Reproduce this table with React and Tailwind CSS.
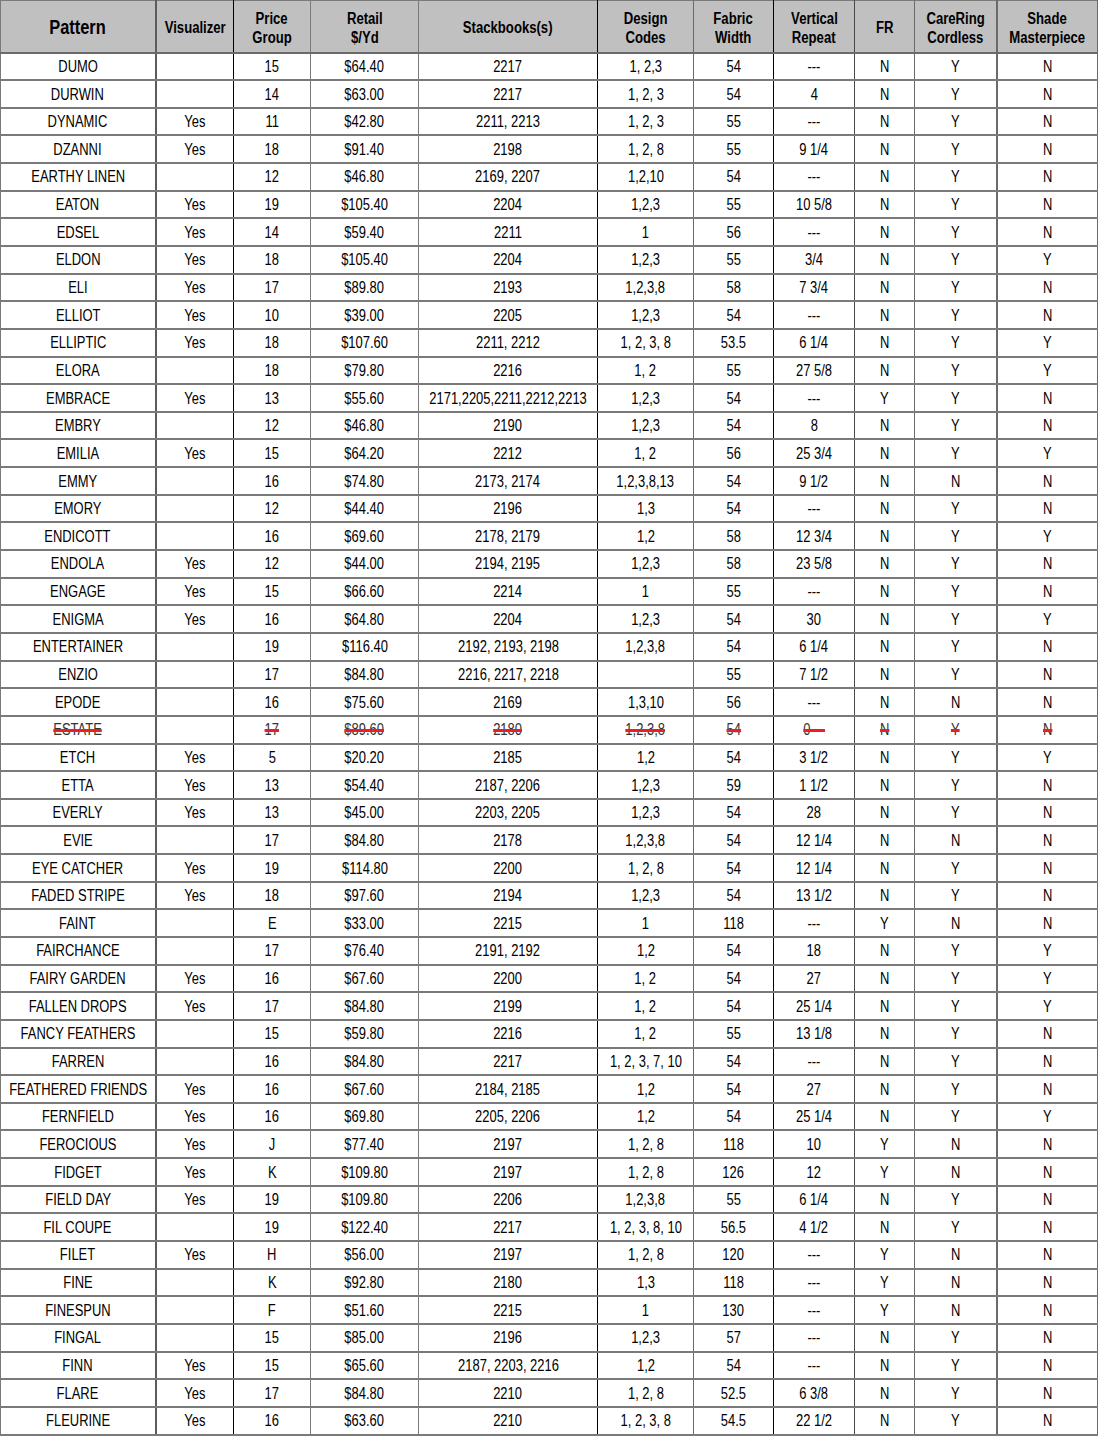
const COLS = [
  { key: 'pattern', label: ['Pattern'], width: 155, big: true, border: 'border-r-2 border-r-[#5c5c5c]' },
  { key: 'vis', label: ['Visualizer'], width: 78, border: 'border-r border-r-black' },
  { key: 'price', label: ['Price', 'Group'], width: 77, border: 'border-r border-r-[#7a7a7a]' },
  { key: 'retail', label: ['Retail', '$/Yd'], width: 108, border: 'border-r border-r-[#7a7a7a]' },
  { key: 'stack', label: ['Stackbooks(s)'], width: 179, border: 'border-r border-r-black' },
  { key: 'codes', label: ['Design', 'Codes'], width: 96, border: 'border-r border-r-[#6a6a6a]' },
  { key: 'fw', label: ['Fabric', 'Width'], width: 80, border: 'border-r border-r-black' },
  { key: 'vr', label: ['Vertical', 'Repeat'], width: 81, border: 'border-r border-r-[#4a4a4a]' },
  { key: 'fr', label: ['FR'], width: 60, border: 'border-r border-r-[#6a6a6a]' },
  { key: 'care', label: ['CareRing', 'Cordless'], width: 82, border: 'border-r-2 border-r-[#6a6a6a]' },
  { key: 'shade', label: ['Shade', 'Masterpiece'], width: 101, border: 'border-r border-r-[#6a6a6a]' },
];

const RAW = `DUMO||15|$64.40|2217|1, 2,3|54|---|N|Y|N
DURWIN||14|$63.00|2217|1, 2, 3|54|4|N|Y|N
DYNAMIC|Yes|11|$42.80|2211, 2213|1, 2, 3|55|---|N|Y|N
DZANNI|Yes|18|$91.40|2198|1, 2, 8|55|9 1/4|N|Y|N
EARTHY LINEN||12|$46.80|2169, 2207|1,2,10|54|---|N|Y|N
EATON|Yes|19|$105.40|2204|1,2,3|55|10 5/8|N|Y|N
EDSEL|Yes|14|$59.40|2211|1|56|---|N|Y|N
ELDON|Yes|18|$105.40|2204|1,2,3|55|3/4|N|Y|Y
ELI|Yes|17|$89.80|2193|1,2,3,8|58|7 3/4|N|Y|N
ELLIOT|Yes|10|$39.00|2205|1,2,3|54|---|N|Y|N
ELLIPTIC|Yes|18|$107.60|2211, 2212|1, 2, 3, 8|53.5|6 1/4|N|Y|Y
ELORA||18|$79.80|2216|1, 2|55|27 5/8|N|Y|Y
EMBRACE|Yes|13|$55.60|2171,2205,2211,2212,2213|1,2,3|54|---|Y|Y|N
EMBRY||12|$46.80|2190|1,2,3|54|8|N|Y|N
EMILIA|Yes|15|$64.20|2212|1, 2|56|25 3/4|N|Y|Y
EMMY||16|$74.80|2173, 2174|1,2,3,8,13|54|9 1/2|N|N|N
EMORY||12|$44.40|2196|1,3|54|---|N|Y|N
ENDICOTT||16|$69.60|2178, 2179|1,2|58|12 3/4|N|Y|Y
ENDOLA|Yes|12|$44.00|2194, 2195|1,2,3|58|23 5/8|N|Y|N
ENGAGE|Yes|15|$66.60|2214|1|55|---|N|Y|N
ENIGMA|Yes|16|$64.80|2204|1,2,3|54|30|N|Y|Y
ENTERTAINER||19|$116.40|2192, 2193, 2198|1,2,3,8|54|6 1/4|N|Y|N
ENZIO||17|$84.80|2216, 2217, 2218||55|7 1/2|N|Y|N
EPODE||16|$75.60|2169|1,3,10|56|---|N|N|N
ESTATE||17|$89.60|2180|1,2,3,8|54|0|N|Y|N
ETCH|Yes|5|$20.20|2185|1,2|54|3 1/2|N|Y|Y
ETTA|Yes|13|$54.40|2187, 2206|1,2,3|59|1 1/2|N|Y|N
EVERLY|Yes|13|$45.00|2203, 2205|1,2,3|54|28|N|Y|N
EVIE||17|$84.80|2178|1,2,3,8|54|12 1/4|N|N|N
EYE CATCHER|Yes|19|$114.80|2200|1, 2, 8|54|12 1/4|N|Y|N
FADED STRIPE|Yes|18|$97.60|2194|1,2,3|54|13 1/2|N|Y|N
FAINT||E|$33.00|2215|1|118|---|Y|N|N
FAIRCHANCE||17|$76.40|2191, 2192|1,2|54|18|N|Y|Y
FAIRY GARDEN|Yes|16|$67.60|2200|1, 2|54|27|N|Y|Y
FALLEN DROPS|Yes|17|$84.80|2199|1, 2|54|25 1/4|N|Y|Y
FANCY FEATHERS||15|$59.80|2216|1, 2|55|13 1/8|N|Y|N
FARREN||16|$84.80|2217|1, 2, 3, 7, 10|54|---|N|Y|N
FEATHERED FRIENDS|Yes|16|$67.60|2184, 2185|1,2|54|27|N|Y|N
FERNFIELD|Yes|16|$69.80|2205, 2206|1,2|54|25 1/4|N|Y|Y
FEROCIOUS|Yes|J|$77.40|2197|1, 2, 8|118|10|Y|N|N
FIDGET|Yes|K|$109.80|2197|1, 2, 8|126|12|Y|N|N
FIELD DAY|Yes|19|$109.80|2206|1,2,3,8|55|6 1/4|N|Y|N
FIL COUPE||19|$122.40|2217|1, 2, 3, 8, 10|56.5|4 1/2|N|Y|N
FILET|Yes|H|$56.00|2197|1, 2, 8|120|---|Y|N|N
FINE||K|$92.80|2180|1,3|118|---|Y|N|N
FINESPUN||F|$51.60|2215|1|130|---|Y|N|N
FINGAL||15|$85.00|2196|1,2,3|57|---|N|Y|N
FINN|Yes|15|$65.60|2187, 2203, 2216|1,2|54|---|N|Y|N
FLARE|Yes|17|$84.80|2210|1, 2, 8|52.5|6 3/8|N|Y|N
FLEURINE|Yes|16|$63.60|2210|1, 2, 3, 8|54.5|22 1/2|N|Y|N`;

const ROWS = RAW.split('\n').map((line) => line.split('|'));

const font = { fontFamily: '"Liberation Sans", Arial, sans-serif' };

export default function App() {
  return (
    <div className="w-[1098px] bg-white" style={font}>
      <table className="w-[1097px] table-fixed border-collapse text-black">
        <colgroup>
          {COLS.map((c) => (
            <col key={c.key} style={{ width: c.width }} />
          ))}
        </colgroup>
        <thead>
          <tr className="h-[52px] bg-[#c0c0c0]">
            {COLS.map((c, i) => (
              <th
                key={c.key}
                className={`border-t border-t-[#7a7a7a] border-b-2 border-b-[#6a6a6a] ${i === 0 ? 'border-l border-l-[#7a7a7a]' : ''} ${c.border} p-0 pt-[3px] align-middle font-bold leading-[19px] whitespace-nowrap ${c.big ? 'text-[20px]' : 'text-[16px]'}`}
              >
                {c.label.map((l) => (
                  <div key={l} className="flex justify-center">
                    <span className="shrink-0 scale-x-[0.82]">{l}</span>
                  </div>
                ))}
              </th>
            ))}
          </tr>
        </thead>
        <tbody>
          {ROWS.map((row, r) => {
            const struck = row[0] === 'ESTATE';
            return (
              <tr key={r} className="h-[27.65px]">
                {row.map((cell, i) => (
                  <td
                    key={i}
                    className={`border-b-2 border-b-[#7a7a7a] ${i === 0 ? 'border-l border-l-[#7a7a7a]' : ''} ${COLS[i].border} p-0 pt-px align-middle text-[15.8px] leading-none whitespace-nowrap`}
                  >
                    <div className="flex justify-center">
                      {struck && cell ? (
                        <span className="shrink-0 scale-x-[0.82] text-[#333] line-through decoration-[#ee1c24] decoration-[3px]">
                          {cell === '0' ? '0\u00a0\u00a0\u00a0\u00a0' : cell}
                        </span>
                      ) : (
                        <span className="shrink-0 scale-x-[0.82]">{cell}</span>
                      )}
                    </div>
                  </td>
                ))}
              </tr>
            );
          })}
        </tbody>
      </table>
    </div>
  );
}
